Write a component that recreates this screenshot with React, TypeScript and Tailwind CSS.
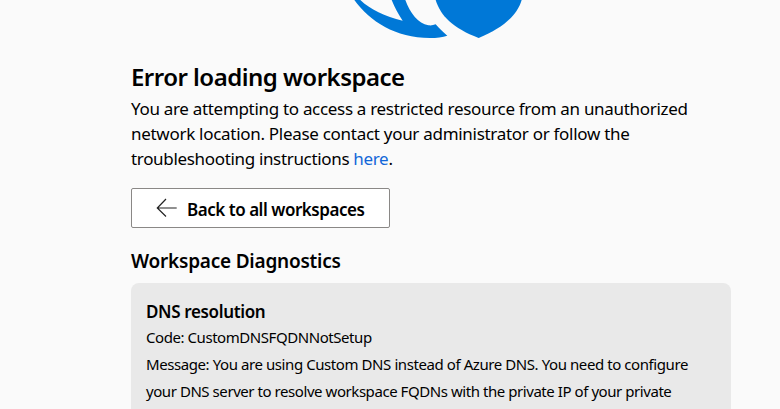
function WorkspaceLogo() {
  return (
    <svg className="ml-[199px] block h-[50px] w-[220px]" viewBox="0 0 660 150" fill="#0078d7" aria-hidden="true">
      <path d="M73 0C120 64 196 114 300 114C320 114 338 111 352 107C338 96 328 85 317 73C310 76 303 77 295 76C265 70 240 40 226 0H185C194 23 205 43 218 62C165 50 120 28 91 0Z" />
      <path d="M317 0C332 48 368 84 446 114C522 82 562 44 575 0Z" />
    </svg>
  );
}

function BackArrow() {
  return (
    <svg className="h-5 w-[21px] shrink-0" viewBox="0 0 21 20" fill="none" stroke="#222" strokeWidth="1.2" aria-hidden="true">
      <path d="M10 1L1.3 10L10 18.5M1.3 10H20.7" />
    </svg>
  );
}

export default function App() {
  return (
    <main className="h-[409px] w-full overflow-hidden bg-[#fafafa] pl-[131px] font-['Noto_Sans','Open_Sans',sans-serif] text-black">
      <WorkspaceLogo />
      <h1 className="mt-[10px] h-[34px] text-[24px] leading-[34px] font-semibold tracking-[-0.52px] whitespace-nowrap">
        Error loading workspace
      </h1>
      <p className="mt-[2px] flex flex-col text-[17px] leading-[25px] whitespace-nowrap">
        <span className="tracking-[-0.31px]">You are attempting to access a restricted resource from an unauthorized</span>
        <span className="tracking-[-0.29px]">network location. Please contact your administrator or follow the</span>
        <span className="tracking-[-0.33px]">
          troubleshooting instructions <a className="text-[#1267d8]" href="#">here</a>.
        </span>
      </p>
      <button className="mt-[17px] flex h-[40px] w-[259px] items-center rounded-[2px] border border-[#8a8886] bg-white pl-[24px]">
        <BackArrow />
        <span className="ml-[10px] pt-[3px] text-[17px] leading-6 font-semibold tracking-[-0.47px] whitespace-nowrap">Back to all workspaces</span>
      </button>
      <h2 className="mt-[19px] h-[28px] text-[19px] leading-[28px] font-semibold tracking-[-0.22px] whitespace-nowrap">Workspace Diagnostics</h2>
      <section className="mt-[8px] h-[150px] w-[600px] rounded-[8px] bg-[#e9e9e9] pt-[16px] pl-[15px] whitespace-nowrap">
        <h3 className="h-[25px] text-[17px] leading-[25px] font-semibold tracking-[-0.35px]">DNS resolution</h3>
        <p className="flex flex-col text-[15px] leading-[27px]">
          <span className="tracking-[-0.44px]">Code: CustomDNSFQDNNotSetup</span>
          <span className="tracking-[-0.42px]">Message: You are using Custom DNS instead of Azure DNS. You need to configure</span>
          <span className="tracking-[-0.44px]">your DNS server to resolve workspace FQDNs with the private IP of your private</span>
        </p>
      </section>
    </main>
  );
}
